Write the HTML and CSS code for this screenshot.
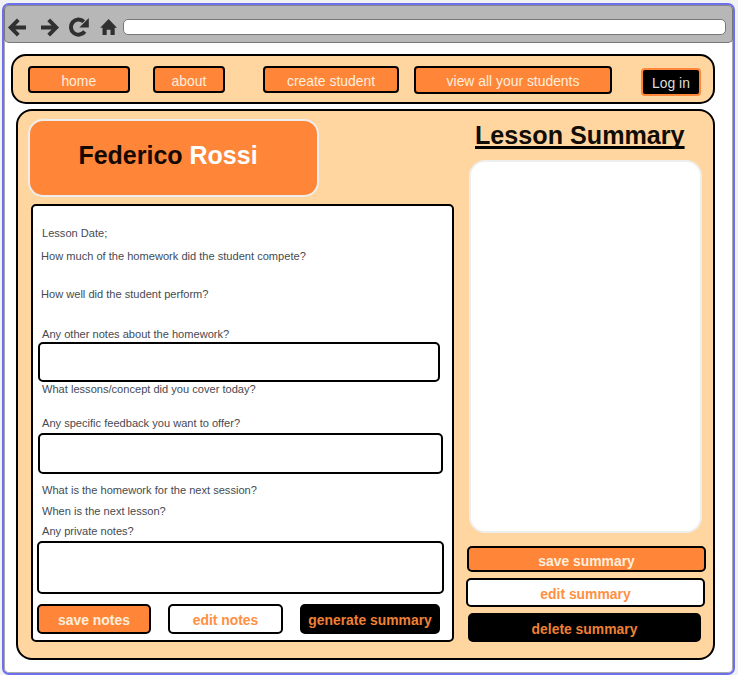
FILE: index.html
```html
<!DOCTYPE html>
<html lang="en">
<head>
<meta charset="utf-8">
<title>Lesson Summary</title>
<link rel="stylesheet" href="styles.css">
</head>
<body>
<div class="window">
  <header class="toolbar">
    <svg class="icons" width="119" height="37" viewBox="4 5 119 37" fill="none" stroke="#303030" stroke-width="3.9">
      <path d="M26 27.5H11M18.3 19.8L10.7 27.5L18.3 35.2"/>
      <path d="M41 27.5H56M48.7 19.8L56.3 27.5L48.7 35.2"/>
      <path d="M84.7 31.5A7.6 7.6 0 1 1 83.8 21.6" stroke-width="4"/>
      <path d="M88.8 18V27.4H79.4Z" fill="#303030" stroke="none"/>
      <path d="M108.6 19L117 27.7H114.7V35H110.5V29.7H106.7V35H102.5V27.7H100.2Z" fill="#303030" stroke="none"/>
    </svg>
    <div class="address"></div>
  </header>
  <nav class="nav">
    <button class="btn home">home</button>
    <button class="btn about">about</button>
    <button class="btn create">create student</button>
    <button class="btn view">view all your students</button>
    <button class="btn login">Log in</button>
  </nav>
  <main class="board">
    <section class="left">
      <h1 class="student">Federico <span>Rossi</span></h1>
      <form class="notes">
        <label class="q date">Lesson Date;</label>
        <label class="q amount">How much of the homework did the student compete?</label>
        <label class="q perform">How well did the student perform?</label>
        <label class="q other">Any other notes about the homework?</label>
        <div class="field f1"></div>
        <label class="q cover">What lessons/concept did you cover today?</label>
        <label class="q feedback">Any specific feedback you want to offer?</label>
        <div class="field f2"></div>
        <label class="q next">What is the homework for the next session?</label>
        <label class="q when">When is the next lesson?</label>
        <label class="q private">Any private notes?</label>
        <div class="field f3"></div>
        <div class="actions">
          <button type="button" class="btn bold save">save notes</button>
          <button type="button" class="btn bold light edit">edit notes</button>
          <button type="button" class="btn bold dark generate">generate summary</button>
        </div>
      </form>
    </section>
    <section class="right">
      <h2 class="heading">Lesson Summary</h2>
      <div class="summary"></div>
      <button class="btn bold save-summary">save summary</button>
      <button class="btn bold light edit-summary">edit summary</button>
      <button class="btn bold dark delete-summary">delete summary</button>
    </section>
  </main>
</div>
</body>
</html>
```

FILE: styles.css
```css
* { box-sizing: border-box; }
body {
  margin: 0;
  height: 675px;
  padding: 3px 3px 0 2px;
  overflow: hidden;
  background: #f1f2f3;
  font-family: "Liberation Sans", Arial, sans-serif;
}
.window {
  height: 672px;
  border: 2px solid #6c70ed;
  border-radius: 7px;
  background: #fff;
  box-shadow: inset 0 0 0 1px #aaa;
}
.toolbar {
  display: flex;
  align-items: flex-start;
  height: 38px;
  background: #b7b7b7;
  border: 1px solid #777;
  border-top-color: #888;
  border-radius: 5px;
}
.icons { flex: none; margin: -1px 0 0 -1px; }
.address {
  width: 603px;
  height: 16px;
  margin: 13px 0 0 0;
  background: #fff;
  border: 1px solid #777;
  border-radius: 5px;
}
.nav {
  display: flex;
  align-items: flex-start;
  width: 703.5px;
  height: 50px;
  margin: 11px 0 0 7px;
  padding: 10px 0 0 14.5px;
  background: #ffd6a0;
  border: 2px solid #000;
  border-radius: 15px;
}
.btn {
  display: block;
  flex: none;
  margin: 0;
  padding: 2px 0 0;
  border: 2px solid #000;
  border-radius: 4px;
  background: #ff8639;
  color: #ffeedd;
  font: 13.9px/16px "Liberation Sans", Arial, sans-serif;
  text-align: center;
  white-space: nowrap;
}
.home { width: 102.5px; height: 27px; }
.about { width: 72px; height: 27px; margin-left: 23px; }
.create { width: 136px; height: 27px; margin-left: 38px; }
.view { width: 198px; height: 28px; margin-left: 15px; }
.login {
  width: 60px;
  height: 28px;
  margin: 2px 0 0 29px;
  background: #000;
  border-color: #ff8639;
  color: #ddd;
}
.board {
  display: flex;
  width: 699px;
  height: 551px;
  margin: 5px 0 0 11.5px;
  background: #ffd6a0;
  border: 2px solid #000;
  border-radius: 16px;
}
.left { width: 423px; margin: 8px 0 0 13.5px; }
.student {
  width: 291px;
  height: 78px;
  margin: 0 0 0 -3px;
  padding: 0 11px 6px 0;
  background: #ff8639;
  border: 2px solid #eee;
  border-radius: 15px;
  color: #140800;
  font-size: 25px;
  line-height: 68px;
  text-align: center;
}
.student span { color: #fff; }
.notes {
  display: flex;
  flex-direction: column;
  align-items: flex-start;
  width: 423px;
  height: 438px;
  margin-top: 7px;
  padding: 19px 0 0 4px;
  background: #fff;
  border: 2px solid #000;
  border-radius: 5px;
}
.q {
  height: 16px;
  margin-left: 5px;
  color: #454a52;
  font-size: 11.08px;
  line-height: 16px;
  white-space: nowrap;
}
.amount { margin: 7px 0 0 4px; }
.perform { margin: 22px 0 0 4px; }
.other { margin-top: 24px; }
.cover { margin-top: -1px; }
.feedback { margin-top: 18px; }
.next { margin-top: 8px; }
.when { margin-top: 5px; }
.private { margin-top: 4px; }
.field {
  background: #fff;
  border: 2px solid #000;
  border-radius: 5px;
}
.f1 { width: 402px; height: 40px; margin-left: 1px; }
.f2 { width: 405px; height: 41px; margin: 2px 0 0 1px; }
.f3 { width: 406.5px; height: 53px; margin-top: 2px; }
.actions { display: flex; margin-top: 10px; }
.bold { font-weight: bold; border-radius: 5px; }
.light { background: #fff; color: #ff8f42; }
.dark { background: #000; color: #f08035; }
.save { width: 114px; height: 30px; }
.edit { width: 115px; height: 30px; margin-left: 17px; }
.generate { width: 140px; height: 30px; margin-left: 17px; }
.right { width: 243px; margin-left: 12px; padding-top: 9px; }
.heading {
  width: 210px;
  height: 30px;
  margin: 0 0 0 9px;
  border: 0;
  color: #110c06;
  font-size: 25.15px;
  line-height: 30px;
  white-space: nowrap;
  text-decoration: underline #000;
  text-decoration-thickness: 3px;
  text-underline-offset: 2px;
  text-decoration-skip-ink: none;
}
.summary {
  width: 233px;
  height: 373px;
  margin: 10px 0 0 3px;
  background: #fff;
  border: 2px solid #eee;
  border-radius: 16px;
}
.save-summary { width: 239px; height: 26px; margin: 13px 0 0 1px; padding-top: 4px; }
.edit-summary { width: 239px; height: 29px; margin-top: 6px; }
.delete-summary { width: 233px; height: 29px; margin: 6px 0 0 2px; }
```
